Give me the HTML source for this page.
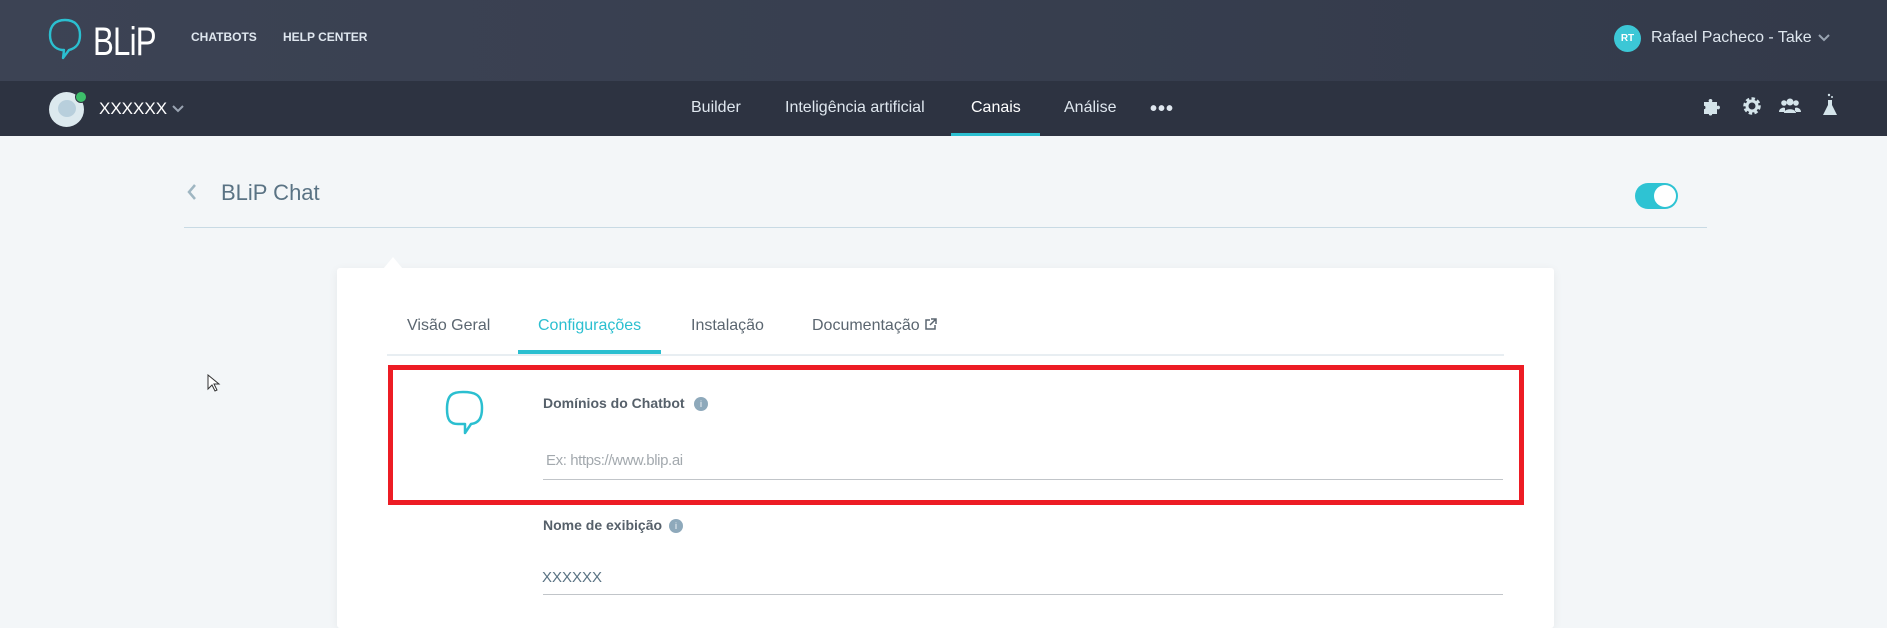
<!DOCTYPE html>
<html><head><meta charset="utf-8"><style>
*{margin:0;padding:0;box-sizing:border-box}
body{width:1887px;height:620px;overflow:hidden;font-family:"Liberation Sans",sans-serif;background:#f3f6f8;position:relative}
.a{position:absolute}
#top{left:0;top:0;width:1887px;height:81px;background:linear-gradient(90deg,#3c4354,#333a4a)}
#nav2{left:0;top:81px;width:1887px;height:55px;background:#2d3341}
.t{white-space:nowrap}
</style></head><body>
<div id="top" class="a"></div>
<div id="nav2" class="a"></div>
<!-- logo -->
<svg class="a" style="left:47px;top:18px" width="36" height="42" viewBox="0 0 36 42"><path d="M18 2C8 2 3 8 3 17c0 9 5 14 12 15l2 0-1 8 6-8c8-2 11-7 11-15C33 8 28 2 18 2z" fill="none" stroke="#2bbfd0" stroke-width="2.4" stroke-linejoin="round"/></svg>
<div class="a t" style="left:93px;top:20px;font-size:40px;color:#fff;letter-spacing:-1px;transform:scaleX(0.78);transform-origin:left top">BLiP</div>
<div class="a t" style="left:191px;top:30px;font-size:12px;color:#dfe7ef;font-weight:bold">CHATBOTS</div>
<div class="a t" style="left:283px;top:30px;font-size:12px;color:#dfe7ef;font-weight:bold">HELP CENTER</div>
<!-- right user -->
<div class="a" style="left:1614px;top:25px;width:27px;height:27px;border-radius:50%;background:#3cc7d6;color:#fff;font-size:10px;font-weight:bold;text-align:center;line-height:27px">RT</div>
<div class="a t" style="left:1651px;top:29px;font-size:16px;color:#dfe7ef">Rafael Pacheco - Take</div>
<svg class="a" style="left:1817px;top:33px" width="14" height="10"><path d="M2 2l5 5 5-5" stroke="#9aa4b2" stroke-width="2" fill="none"/></svg>
<!-- nav2 left -->
<div class="a" style="left:49px;top:92px;width:35px;height:35px;border-radius:50%;background:#dce9ee"></div>
<div class="a" style="left:58px;top:100px;width:18px;height:17px;border-radius:50%;background:#b8cfdc"></div>
<div class="a" style="left:75px;top:91px;width:12px;height:12px;border-radius:50%;background:#3dbf6a;border:1.5px solid #2d3341"></div>
<div class="a t" style="left:99px;top:99px;font-size:17px;color:#fff">XXXXXX</div>
<svg class="a" style="left:171px;top:104px" width="14" height="10"><path d="M2 2l5 5 5-5" stroke="#9aa4b2" stroke-width="2" fill="none"/></svg>
<!-- nav center -->
<div class="a t" style="left:691px;top:99px;font-size:16px;color:#dfe7ef">Builder</div>
<div class="a t" style="left:785px;top:99px;font-size:16px;color:#dfe7ef">Inteligência artificial</div>
<div class="a t" style="left:971px;top:99px;font-size:16px;color:#fff">Canais</div>
<div class="a" style="left:951px;top:133px;width:89px;height:3px;background:#2bbfd0"></div>
<div class="a t" style="left:1064px;top:99px;font-size:16px;color:#dfe7ef">Análise</div>
<div class="a t" style="left:1150px;top:98px;font-size:20px;color:#dfe7ef;font-weight:bold;letter-spacing:1px">•••</div>
<!-- icons -->
<svg class="a" style="left:1702px;top:96px" width="22" height="20" viewBox="0 0 22 20"><path d="M2 6h5c-2-4 5-4 3 0h5v4c4-2 4 5 0 3v5h-5c1 2-4 2-3 0H2v-5c2 1 2-4 0-3z" fill="#d4e4ea"/></svg>
<svg class="a" style="left:1742px;top:96px" width="20" height="20" viewBox="0 0 20 20"><circle cx="10" cy="10" r="6.5" fill="none" stroke="#d4e4ea" stroke-width="4.5" stroke-dasharray="3 2"/><circle cx="10" cy="10" r="5" fill="none" stroke="#d4e4ea" stroke-width="3"/></svg>
<svg class="a" style="left:1779px;top:97px" width="22" height="18" viewBox="0 0 22 18"><circle cx="11" cy="5" r="3.5" fill="#d4e4ea"/><circle cx="5" cy="6" r="2.8" fill="#d4e4ea"/><circle cx="17" cy="6" r="2.8" fill="#d4e4ea"/><path d="M5 16c0-5 12-5 12 0zM0 15c0-4 5-5 6-4v4zM22 15c0-4-5-5-6-4v4z" fill="#d4e4ea"/></svg>
<svg class="a" style="left:1822px;top:93px" width="16" height="24" viewBox="0 0 16 24"><path d="M6 7h4v5l5 10H1l5-10z" fill="#d4e4ea"/><circle cx="7" cy="2" r="1.2" fill="#d4e4ea"/><circle cx="10" cy="4" r="1" fill="#d4e4ea"/></svg>
<!-- header -->
<svg class="a" style="left:185px;top:182px" width="14" height="20"><path d="M10 3l-6 7 6 7" stroke="#9fb6c2" stroke-width="2.5" fill="none"/></svg>
<div class="a t" style="left:221px;top:180px;font-size:22px;color:#5a7384">BLiP Chat</div>
<div class="a" style="left:1635px;top:183px;width:43px;height:26px;border-radius:13px;background:#2ec3d3"></div>
<div class="a" style="left:1654px;top:185px;width:22px;height:22px;border-radius:50%;background:#fff"></div>
<div class="a" style="left:184px;top:227px;width:1523px;height:1px;background:#c8dae4"></div>
<!-- card -->
<div class="a" style="left:337px;top:268px;width:1217px;height:360px;background:#fff;border-radius:3px;box-shadow:0 2px 10px rgba(0,0,0,.06)"></div>
<div class="a" style="left:383px;top:257px;width:0;height:0;border-left:10px solid transparent;border-right:10px solid transparent;border-bottom:12px solid #fff"></div>
<div class="a t" style="left:407px;top:317px;font-size:16px;color:#5b6670">Visão Geral</div>
<div class="a t" style="left:538px;top:317px;font-size:16px;color:#2bbfd0">Configurações</div>
<div class="a t" style="left:691px;top:317px;font-size:16px;color:#5b6670">Instalação</div>
<div class="a t" style="left:812px;top:317px;font-size:16px;color:#5b6670">Documentação</div>
<svg class="a" style="left:924px;top:318px" width="13" height="13" viewBox="0 0 13 13"><path d="M6 2H2v9h9V7M7 1h5v5M12 1L6 7" stroke="#5b6670" stroke-width="1.5" fill="none"/></svg>
<div class="a" style="left:387px;top:354px;width:1117px;height:2px;background:#e8eef2"></div>
<div class="a" style="left:518px;top:350px;width:143px;height:4px;background:#2bbfd0"></div>
<!-- red box -->
<div class="a" style="left:388px;top:365px;width:1136px;height:140px;border:5px solid #ed1c24"></div>
<svg class="a" style="left:443px;top:389px" width="42" height="50" viewBox="0 0 42 50"><path d="M20 3C10 3 4 5 4 20c0 11 3 15 11 15h7v9l6-9c8-1 11-6 11-16C39 5 31 3 20 3z" fill="none" stroke="#2bbfd0" stroke-width="2.5" stroke-linejoin="round"/></svg>
<div class="a t" style="left:543px;top:395px;font-size:14px;font-weight:bold;color:#56606a">Domínios do Chatbot</div>
<div class="a" style="left:694px;top:397px;width:14px;height:14px;border-radius:50%;background:#8ea9bb;color:#fff;font-size:9px;text-align:center;line-height:14px">i</div>
<div class="a t" style="left:546px;top:452px;font-size:15px;color:#a3a9ae;letter-spacing:-0.4px">Ex: https://www.blip.ai</div>
<div class="a" style="left:543px;top:479px;width:960px;height:1px;background:#c1c5c9"></div>
<div class="a t" style="left:543px;top:517px;font-size:14px;font-weight:bold;color:#56606a">Nome de exibição</div>
<div class="a" style="left:669px;top:519px;width:14px;height:14px;border-radius:50%;background:#8ea9bb;color:#fff;font-size:9px;text-align:center;line-height:14px">i</div>
<div class="a t" style="left:542px;top:569px;font-size:15px;color:#5a7384">XXXXXX</div>
<div class="a" style="left:543px;top:594px;width:960px;height:1px;background:#c1c5c9"></div>
<!-- cursor -->
<svg class="a" style="left:207px;top:374px" width="14" height="20"><path d="M1 1v14l4-4 3 6 2-1-3-6h5z" fill="#fff" stroke="#333" stroke-width="1"/></svg>
</body></html>
